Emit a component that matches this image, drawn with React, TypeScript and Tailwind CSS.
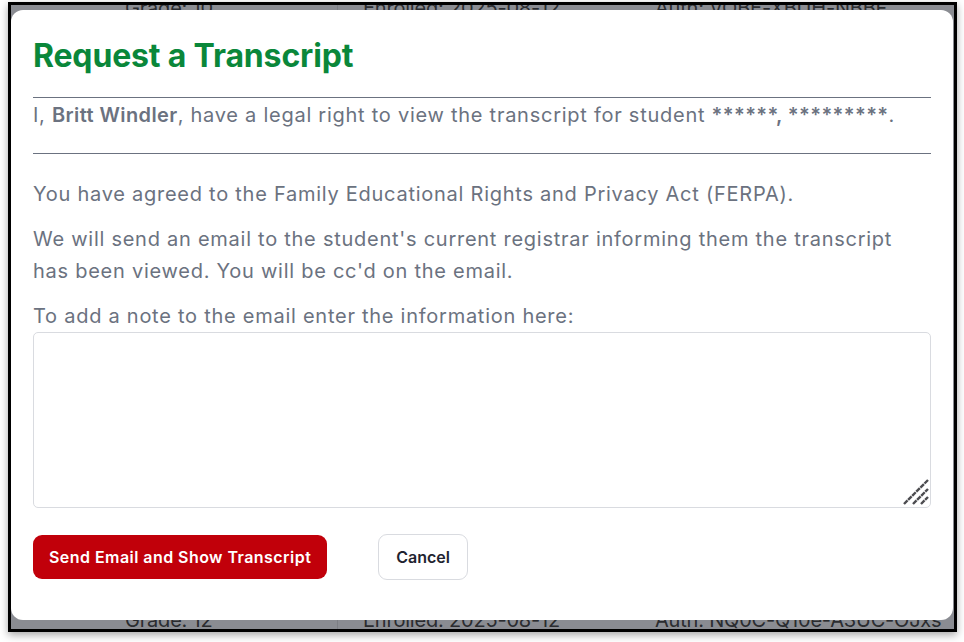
import React from "react";

function BackdropRow({ grade, enrolled, auth }: { grade: string; enrolled: string; auth: string }) {
  return (
    <div className="flex h-[32px] items-center text-[20px] tracking-[-0.01em] text-[#2b2c30]">
      <div className="w-[326px] pl-[114px]">{grade}</div>
      <div className="h-full w-px bg-[#7c7e84]" />
      <div className="w-[317px] pl-[25px]">{enrolled}</div>
      <div className="pl-0">{auth}</div>
    </div>
  );
}

export default function App() {
  return (
    <div className="w-[964px] h-[642px] bg-white pl-[8px] pt-[2px] font-['Inter','Noto_Sans',sans-serif]">
      <div className="relative w-[949px] h-[630px] border-[3px] border-black bg-[#8a8c92] overflow-hidden shadow-[0_3px_8px_rgba(0,0,0,0.35)]">
        <div className="flex h-full flex-col justify-between">
          <div className="-mt-[13px]">
            <BackdropRow grade="Grade: 10" enrolled="Enrolled: 2025-08-12" auth="Auth: VQBE-XBUH-NBBF" />
          </div>
          <div className="-mb-[7px]">
            <BackdropRow grade="Grade: 12" enrolled="Enrolled: 2025-08-12" auth="Auth: NQ0C-Q10e-A3UC-OJxs" />
          </div>
        </div>

        <div className="absolute left-0 top-[5px] w-[942px] h-[610px] rounded-[12px] bg-white px-[22px] pt-[26px]">
          <h1 className="text-[32px] leading-[40px] font-bold tracking-[-0.005em] text-[#0a873a]">Request a Transcript</h1>
          <div className="mt-[21px] border-t border-b border-[#6b7280] pt-[1px] pb-[22px] text-[20px] leading-[32px] tracking-[0.037em] text-[#6b7280]">
            I, <span className="font-semibold tracking-[0.02em]">Britt Windler</span>, have a legal right to view the transcript for student{" "}
            <span className="font-semibold tracking-[0.02em]">******, *********</span>.
          </div>
          <div className="mt-[24px] text-[20px] leading-[32px] tracking-[0.037em] text-[#6b7280]">
            <p>You have agreed to the Family Educational Rights and Privacy Act (FERPA).</p>
            <p className="mt-[13px]">
              We will send an email to the student's current registrar informing them the transcript has been viewed. You will be cc'd on the email.
            </p>
            <p className="mt-[13px]">To add a note to the email enter the information here:</p>
          </div>
          <div className="relative">
            <textarea className="block h-[176px] w-full resize-none rounded-[5px] border border-[#d9dbe0] bg-white outline-none" />
            <svg className="absolute right-[2px] bottom-[3px]" width="26" height="26" viewBox="0 0 26 26">
              <g stroke="#4c4c50" strokeWidth="2.4" strokeDasharray="5 0.8">
                <line x1="1" y1="25" x2="25" y2="1" />
                <line x1="10" y1="25" x2="25" y2="10" />
                <line x1="18" y1="25" x2="25" y2="18" />
              </g>
            </svg>
          </div>
          <div className="mt-[26px] flex items-center gap-[51px]">
            <button className="h-[44px] rounded-[9px] bg-[#c1000a] px-[16px] text-[16px] font-semibold tracking-[0.028em] text-white">
              Send Email and Show Transcript
            </button>
            <button className="h-[46px] rounded-[9px] border border-[#d9dbe0] bg-white px-[17px] text-[16px] font-semibold text-[#1f2430]">
              Cancel
            </button>
          </div>
        </div>
      </div>
    </div>
  );
}
